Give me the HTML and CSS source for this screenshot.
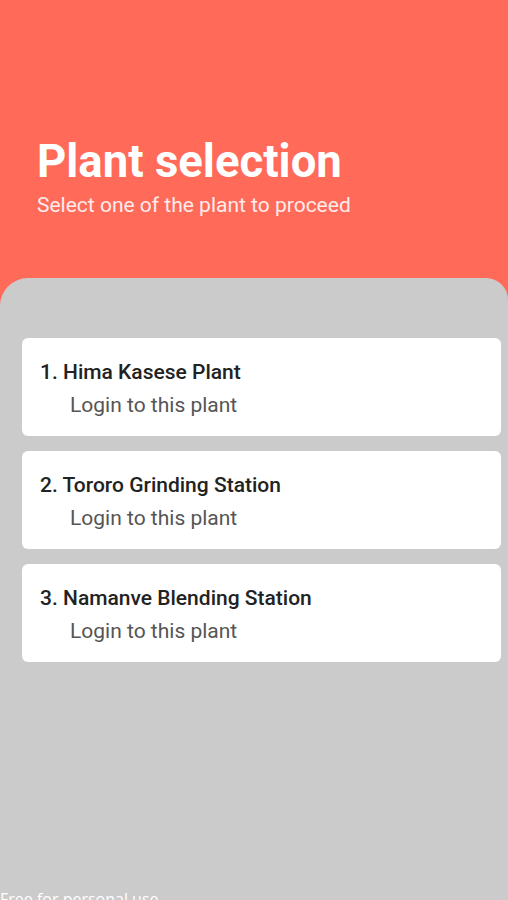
FILE: index.html
```html
<!DOCTYPE html>
<html lang="en">
<head>
  <meta charset="UTF-8">
  <meta name="viewport" content="width=device-width, initial-scale=1.0">
  <title>Plant selection</title>
  <link rel="stylesheet" href="styles.css">
</head>
<body>
  <div class="header">
    <h1>Plant selection</h1>
    <p class="subtitle">Select one of the plant to proceed</p>
  </div>
  <div class="panel">
    <div class="plant-list">
      <div class="plant-card">
        <div class="plant-name">1. Hima Kasese Plant</div>
        <div class="plant-action">Login to this plant</div>
      </div>
      <div class="plant-card">
        <div class="plant-name">2. Tororo Grinding Station</div>
        <div class="plant-action">Login to this plant</div>
      </div>
      <div class="plant-card">
        <div class="plant-name">3. Namanve Blending Station</div>
        <div class="plant-action">Login to this plant</div>
      </div>
    </div>
    <div class="watermark">Free for personal use</div>
  </div>
</body>
</html>
```

FILE: styles.css
```css
body {
  font-family: Roboto, "Liberation Sans", sans-serif;
  margin: 0;
  padding: 0;
  background: #ff6a59;
  display: flex;
  flex-direction: column;
  height: 100vh;
  overflow: hidden;
}
.header {
  height: 278px;
  box-sizing: border-box;
  padding: 136px 37px 0;
  color: #fff;
}
h1 {
  margin: 0;
  font-size: 45.5px;
  font-weight: 700;
  line-height: 52px;
}
.subtitle {
  margin: 3px 0 0;
  font-size: 21px;
  line-height: 28px;
  color: #fdeceb;
}
.panel {
  flex: 1;
  background: #cbcbcb;
  border-radius: 28px 22px 0 0;
  padding: 60px 7px 0 22px;
  display: flex;
  flex-direction: column;
}
.plant-list {
  display: flex;
  flex-direction: column;
  gap: 15px;
}
.plant-card {
  background: #fff;
  border-radius: 6px;
  height: 98px;
  box-sizing: border-box;
  padding: 21px 18px 0;
}
.plant-name {
  font-size: 21px;
  font-weight: 500;
  color: #222;
  line-height: 26px;
}
.plant-action {
  margin-top: 7px;
  padding-left: 30px;
  font-size: 21px;
  color: #555;
  line-height: 26px;
}
.watermark {
  margin-top: auto;
  margin-left: -22px;
  margin-bottom: -9px;
  font-family: "Open Sans", sans-serif;
  font-size: 16px;
  line-height: 20px;
  color: #fff;
}
```
